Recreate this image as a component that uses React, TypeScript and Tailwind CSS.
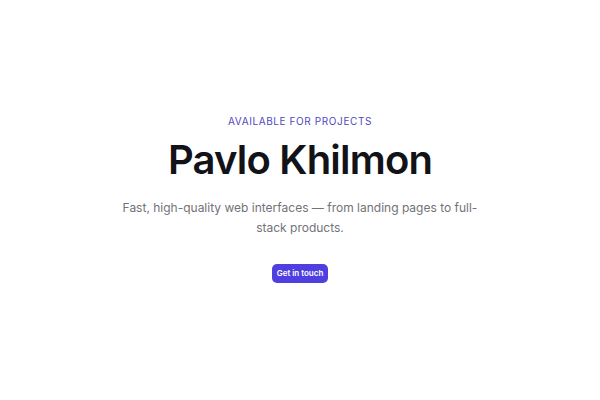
export default function App() {
  return (
    <div
      className="min-h-screen bg-white flex items-center justify-center px-6 pb-[3px]"
      style={{ fontFamily: 'Inter, "Noto Sans", sans-serif' }}
    >
      <div className="flex flex-col items-center text-center">
        <p className="text-[10px] leading-[12px] tracking-[0.06em] uppercase text-[#5048c0]">Available for projects</p>
        <h1 className="mt-[9px] text-[40px] leading-[48px] font-semibold tracking-[-0.02em] text-[#111318]">
          Pavlo Khilmon
        </h1>
        <p className="mt-[14px] max-w-[362px] text-[12px] leading-[20px] text-[#727279]">
          Fast, high-quality web interfaces — from landing pages to full-stack products.
        </p>
        <button className="mt-[26px] rounded-[5px] bg-[#4f3fe0] px-[5px] py-[4px] text-[8px] leading-[11px] font-semibold text-white">
          Get in touch
        </button>
      </div>
    </div>
  )
}
